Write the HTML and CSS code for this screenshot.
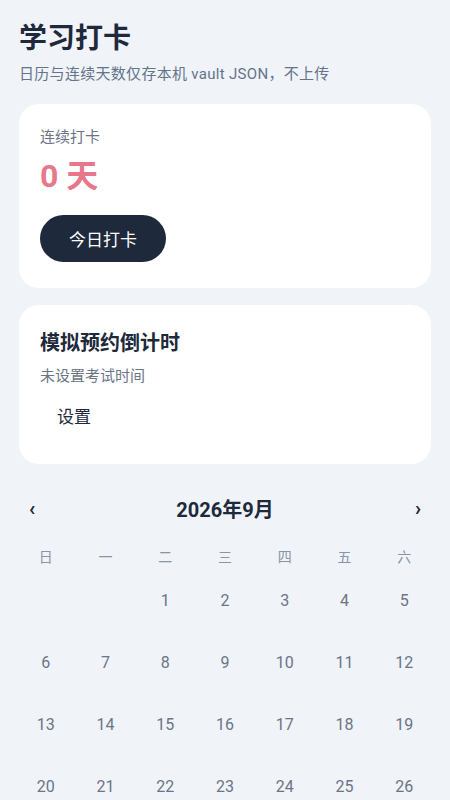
FILE: index.html
```html
<!DOCTYPE html>
<html lang="zh-CN">
<head>
    <meta charset="UTF-8">
    <meta name="viewport" content="width=device-width, initial-scale=1.0">
    <title>学习打卡</title>
    <link rel="stylesheet" href="styles.css">
</head>
<body>
    <div class="page">
        <header class="page-head">
            <h1>学习打卡</h1>
            <p class="hint">日历与连续天数仅存本机 vault JSON，不上传</p>
        </header>

        <section class="card streak">
            <p class="label">连续打卡</p>
            <p class="streak-value">0 天</p>
            <button class="btn-primary">今日打卡</button>
        </section>

        <section class="card countdown">
            <h2>模拟预约倒计时</h2>
            <p class="label">未设置考试时间</p>
            <button class="btn-ghost">设置</button>
        </section>

        <section class="calendar">
            <div class="cal-head">
                <button class="cal-nav">‹</button>
                <span class="cal-title">2026年9月</span>
                <button class="cal-nav">›</button>
            </div>
            <div class="cal-week">
                <span>日</span><span>一</span><span>二</span><span>三</span><span>四</span><span>五</span><span>六</span>
            </div>
            <div class="cal-days">
                <span></span><span></span>
                <span>1</span><span>2</span><span>3</span><span>4</span><span>5</span>
                <span>6</span><span>7</span><span>8</span><span>9</span><span>10</span><span>11</span><span>12</span>
                <span>13</span><span>14</span><span>15</span><span>16</span><span>17</span><span>18</span><span>19</span>
                <span>20</span><span>21</span><span>22</span><span>23</span><span>24</span><span>25</span><span>26</span>
                <span>27</span><span>28</span><span>29</span><span>30</span>
            </div>
        </section>
    </div>
</body>
</html>
```

FILE: styles.css
```css
* {
    margin: 0;
    padding: 0;
    box-sizing: border-box;
}

body {
    font-family: Roboto, "Noto Sans CJK SC", sans-serif;
    background-color: #f0f3f8;
    color: #1e293b;
}

.page {
    padding: 22px 19px 0;
}

.page-head h1 {
    font-size: 28px;
    line-height: 34px;
    font-weight: 700;
    color: #1e293b;
}

.hint {
    margin-top: 8px;
    font-size: 15px;
    line-height: 20px;
    letter-spacing: 0.3px;
    color: #64748b;
}

.card {
    background-color: #fff;
    border-radius: 20px;
    padding: 0 21px;
}

.label {
    font-size: 15px;
    line-height: 21px;
    color: #6b7587;
}

.streak {
    margin-top: 20px;
    padding-top: 23px;
    padding-bottom: 26px;
}

.streak-value {
    margin-top: 8px;
    font-size: 32px;
    line-height: 40px;
    font-weight: 700;
    color: #e8778c;
}

.btn-primary {
    margin-top: 19px;
    height: 47px;
    padding: 0 29px;
    border: none;
    border-radius: 24px;
    background-color: #1e293b;
    color: #fff;
    font-family: inherit;
    font-size: 17px;
}

.countdown {
    margin-top: 17px;
    padding-top: 24px;
    padding-bottom: 29px;
}

.countdown h2 {
    font-size: 20px;
    line-height: 28px;
    font-weight: 700;
}

.countdown .label {
    margin-top: 9px;
}

.btn-ghost {
    display: block;
    margin-top: 8px;
    height: 40px;
    padding: 0 17px;
    border: none;
    border-radius: 20px;
    background: transparent;
    color: #1e293b;
    font-family: inherit;
    font-size: 17px;
}

.calendar {
    margin: 24px -3px 0;
}

.cal-head {
    display: flex;
    align-items: center;
    justify-content: space-between;
    height: 40px;
}

.cal-nav {
    width: 32px;
    height: 32px;
    border: none;
    background: transparent;
    font-family: inherit;
    font-size: 20px;
    font-weight: 700;
    color: #1e293b;
}

.cal-title {
    font-size: 20px;
    font-weight: 700;
}

.cal-week,
.cal-days {
    display: grid;
    grid-template-columns: repeat(7, 1fr);
    text-align: center;
}

.cal-week {
    margin-top: 17px;
    font-size: 14px;
    line-height: 24px;
    color: #8a94a6;
}

.cal-days {
    margin-top: 1px;
}

.cal-days span {
    height: 62px;
    line-height: 62px;
    font-size: 16px;
    color: #6b7587;
}
```
